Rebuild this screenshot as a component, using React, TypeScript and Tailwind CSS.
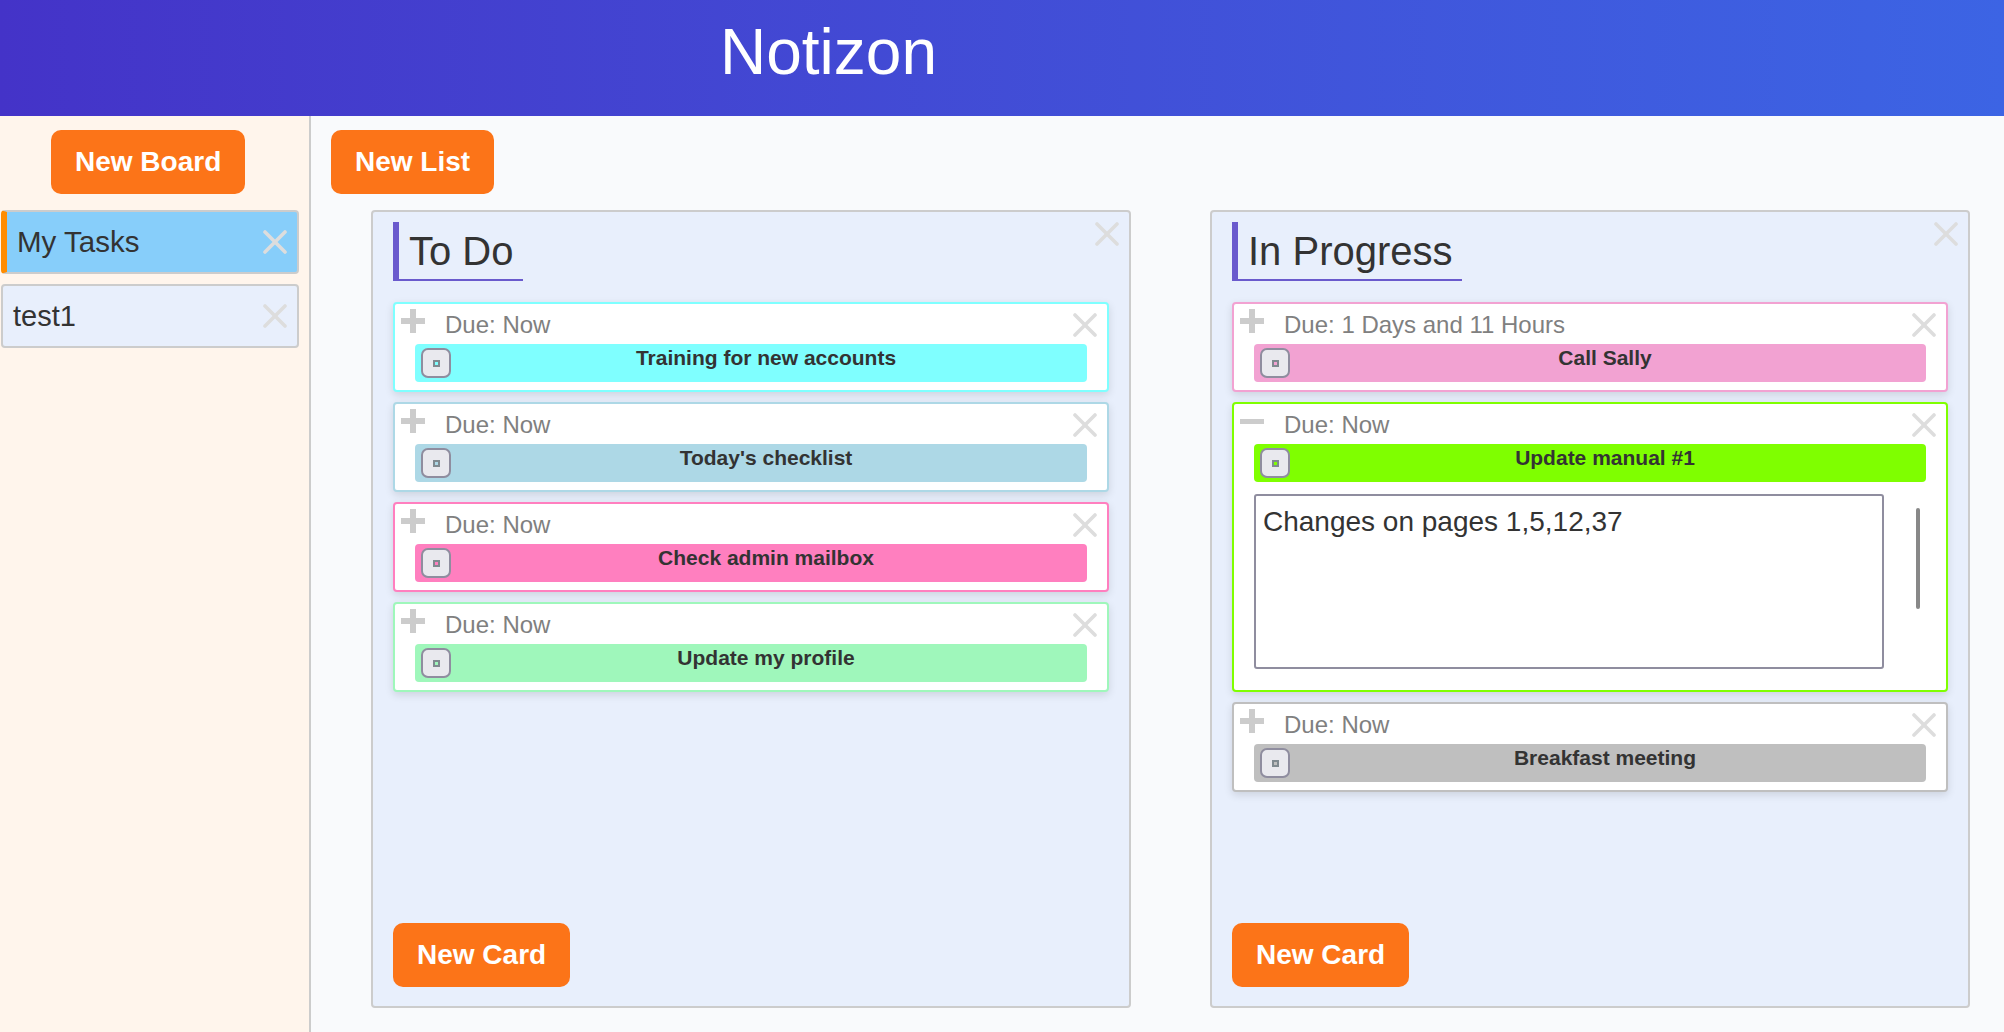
const FONT = "font-['Liberation_Sans',Arial,sans-serif]";

function CloseIcon({ className }: { className: string }) {
  return (
    <svg viewBox="0 0 24 24" className={className} fill="none" stroke="#dddddd" strokeWidth="3.6" strokeLinecap="round">
      <path d="M2 2 22 22" />
      <path d="M22 2 2 22" />
    </svg>
  );
}

function PlusIcon() {
  return (
    <svg viewBox="0 0 24 24" className="w-6 h-6 mt-[5px] shrink-0" fill="#cccccc">
      <path d="M9 0h6v9h9v6h-9v9H9v-9H0V9h9z" />
    </svg>
  );
}

function MinusIcon() {
  return (
    <svg viewBox="0 0 24 24" className="w-6 h-6 mt-[6px] shrink-0" fill="#cccccc">
      <rect x="0" y="9" width="24" height="5" />
    </svg>
  );
}

function OrangeButton({ label, className }: { label: string; className: string }) {
  return (
    <button className={`h-16 px-6 rounded-[10px] bg-[#fc7418] text-white font-bold text-[28px] ${className}`}>
      {label}
    </button>
  );
}

type CardData = {
  due: string;
  title: string;
  border: string;
  bar: string;
  notes?: string;
};

function Card({ due, title, border, bar, notes }: CardData) {
  return (
    <div className={`w-[716px] border-2 rounded-[4px] bg-white shadow-[0_3px_8px_rgba(0,0,0,0.12)] ${border}`}>
      <div className="flex items-start h-10 pl-[6px] pr-[10px]">
        {notes ? <MinusIcon /> : <PlusIcon />}
        <div className="ml-5 mt-[7px] flex-1 text-[24px] leading-[28px] text-[#808080]">Due: {due}</div>
        <CloseIcon className="w-6 h-6 mt-[9px] shrink-0" />
      </div>
      <div className={`flex mx-5 h-[38px] rounded-[4px] ${bar}`}>
        <div className="w-[30px] h-[30px] mt-1 ml-[6px] shrink-0 flex items-center justify-center rounded-[7px] border-2 border-[#8f8d9f] bg-[#e9e9ee]">
          <div className={`w-[7px] h-[7px] border-2 border-[#808a90] ${bar}`} />
        </div>
        <div className="flex-1 pr-[6px] pt-[2px] text-center text-[21px] leading-[24px] font-bold text-[#333333]">{title}</div>
      </div>
      {notes ? (
        <div className="flex items-start ml-5 mt-3 mb-[21px]">
          <textarea
            readOnly
            defaultValue={notes}
            className="w-[630px] h-[175px] resize-none outline-none border-2 border-[#8f8d9f] rounded-[3px] pl-[7px] pr-[6px] pt-[10px] pb-[6px] text-[28px] leading-[32px] text-[#333333] bg-white"
          />
          <div className="ml-8 mt-[14px] w-1 h-[101px] rounded-[2px] bg-[#888888]" />
        </div>
      ) : (
        <div className="h-2" />
      )}
    </div>
  );
}

function List({ title, cards }: { title: string; cards: CardData[] }) {
  return (
    <div className="w-[760px] h-[798px] flex flex-col border-2 border-[#cccccc] rounded-[4px] bg-[#e8effc] pl-5 pr-[10px] pt-[10px] pb-[19px]">
      <div className="flex items-start justify-between">
        <div className="h-[59px] flex items-center border-l-[6px] border-b-2 border-[#6a5acd] pl-[10px] pr-[9px] pt-[1px] text-[40px] text-[#333333]">
          {title}
        </div>
        <CloseIcon className="w-6 h-6" />
      </div>
      <div className="flex flex-col gap-[10px] mt-[21px]">
        {cards.map((c) => (
          <Card key={c.title} {...c} />
        ))}
      </div>
      <OrangeButton label="New Card" className="mt-auto self-start" />
    </div>
  );
}

const todo: CardData[] = [
  { due: "Now", title: "Training for new accounts", border: "border-[#7fffff]", bar: "bg-[#7fffff]" },
  { due: "Now", title: "Today's checklist", border: "border-[#add8e6]", bar: "bg-[#add8e6]" },
  { due: "Now", title: "Check admin mailbox", border: "border-[#ff7fbf]", bar: "bg-[#ff7fbf]" },
  { due: "Now", title: "Update my profile", border: "border-[#9ff7bb]", bar: "bg-[#9ff7bb]" },
];

const progress: CardData[] = [
  { due: "1 Days and 11 Hours", title: "Call Sally", border: "border-[#f2a2d2]", bar: "bg-[#f2a2d2]" },
  { due: "Now", title: "Update manual #1", border: "border-[#7fff00]", bar: "bg-[#7fff00]", notes: "Changes on pages 1,5,12,37" },
  { due: "Now", title: "Breakfast meeting", border: "border-[#bfbfbf]", bar: "bg-[#bfbfbf]" },
];

export default function App() {
  return (
    <div className={`h-[1032px] flex flex-col overflow-hidden ${FONT}`}>
      <header className="h-[116px] shrink-0 flex items-center pl-[720px] pb-[12px] bg-gradient-to-r from-[#4433c8] to-[#3c64e4]">
        <h1 className="text-[64px] text-white">Notizon</h1>
      </header>
      <div className="flex flex-1 min-h-0">
        <aside className="w-[311px] shrink-0 border-r-2 border-[#cccccc] bg-[#fff5ec] pt-[14px] pl-[1px] pr-[10px]">
          <OrangeButton label="New Board" className="ml-[50px]" />
          <div className="flex flex-col gap-[10px] mt-4">
            <div className="h-16 flex items-center justify-between rounded-[4px] border-2 border-l-[6px] border-[#cccccc] border-l-[#ff8c00] bg-[#87cefa] pl-[10px] pr-[10px]">
              <span className="text-[29.5px] text-[#333333] pt-[1px]">My Tasks</span>
              <CloseIcon className="w-6 h-6" />
            </div>
            <div className="h-16 flex items-center justify-between rounded-[4px] border-2 border-[#cccccc] bg-[#e8effc] pl-[10px] pr-[10px]">
              <span className="text-[29px] text-[#333333] pt-[1px]">test1</span>
              <CloseIcon className="w-6 h-6" />
            </div>
          </div>
        </aside>
        <main className="flex-1 min-w-0 bg-[#f9fafc] pt-[14px] pl-5">
          <OrangeButton label="New List" className="" />
          <div className="flex gap-[79px] mt-4 ml-10">
            <List title="To Do" cards={todo} />
            <List title="In Progress" cards={progress} />
          </div>
        </main>
      </div>
    </div>
  );
}
